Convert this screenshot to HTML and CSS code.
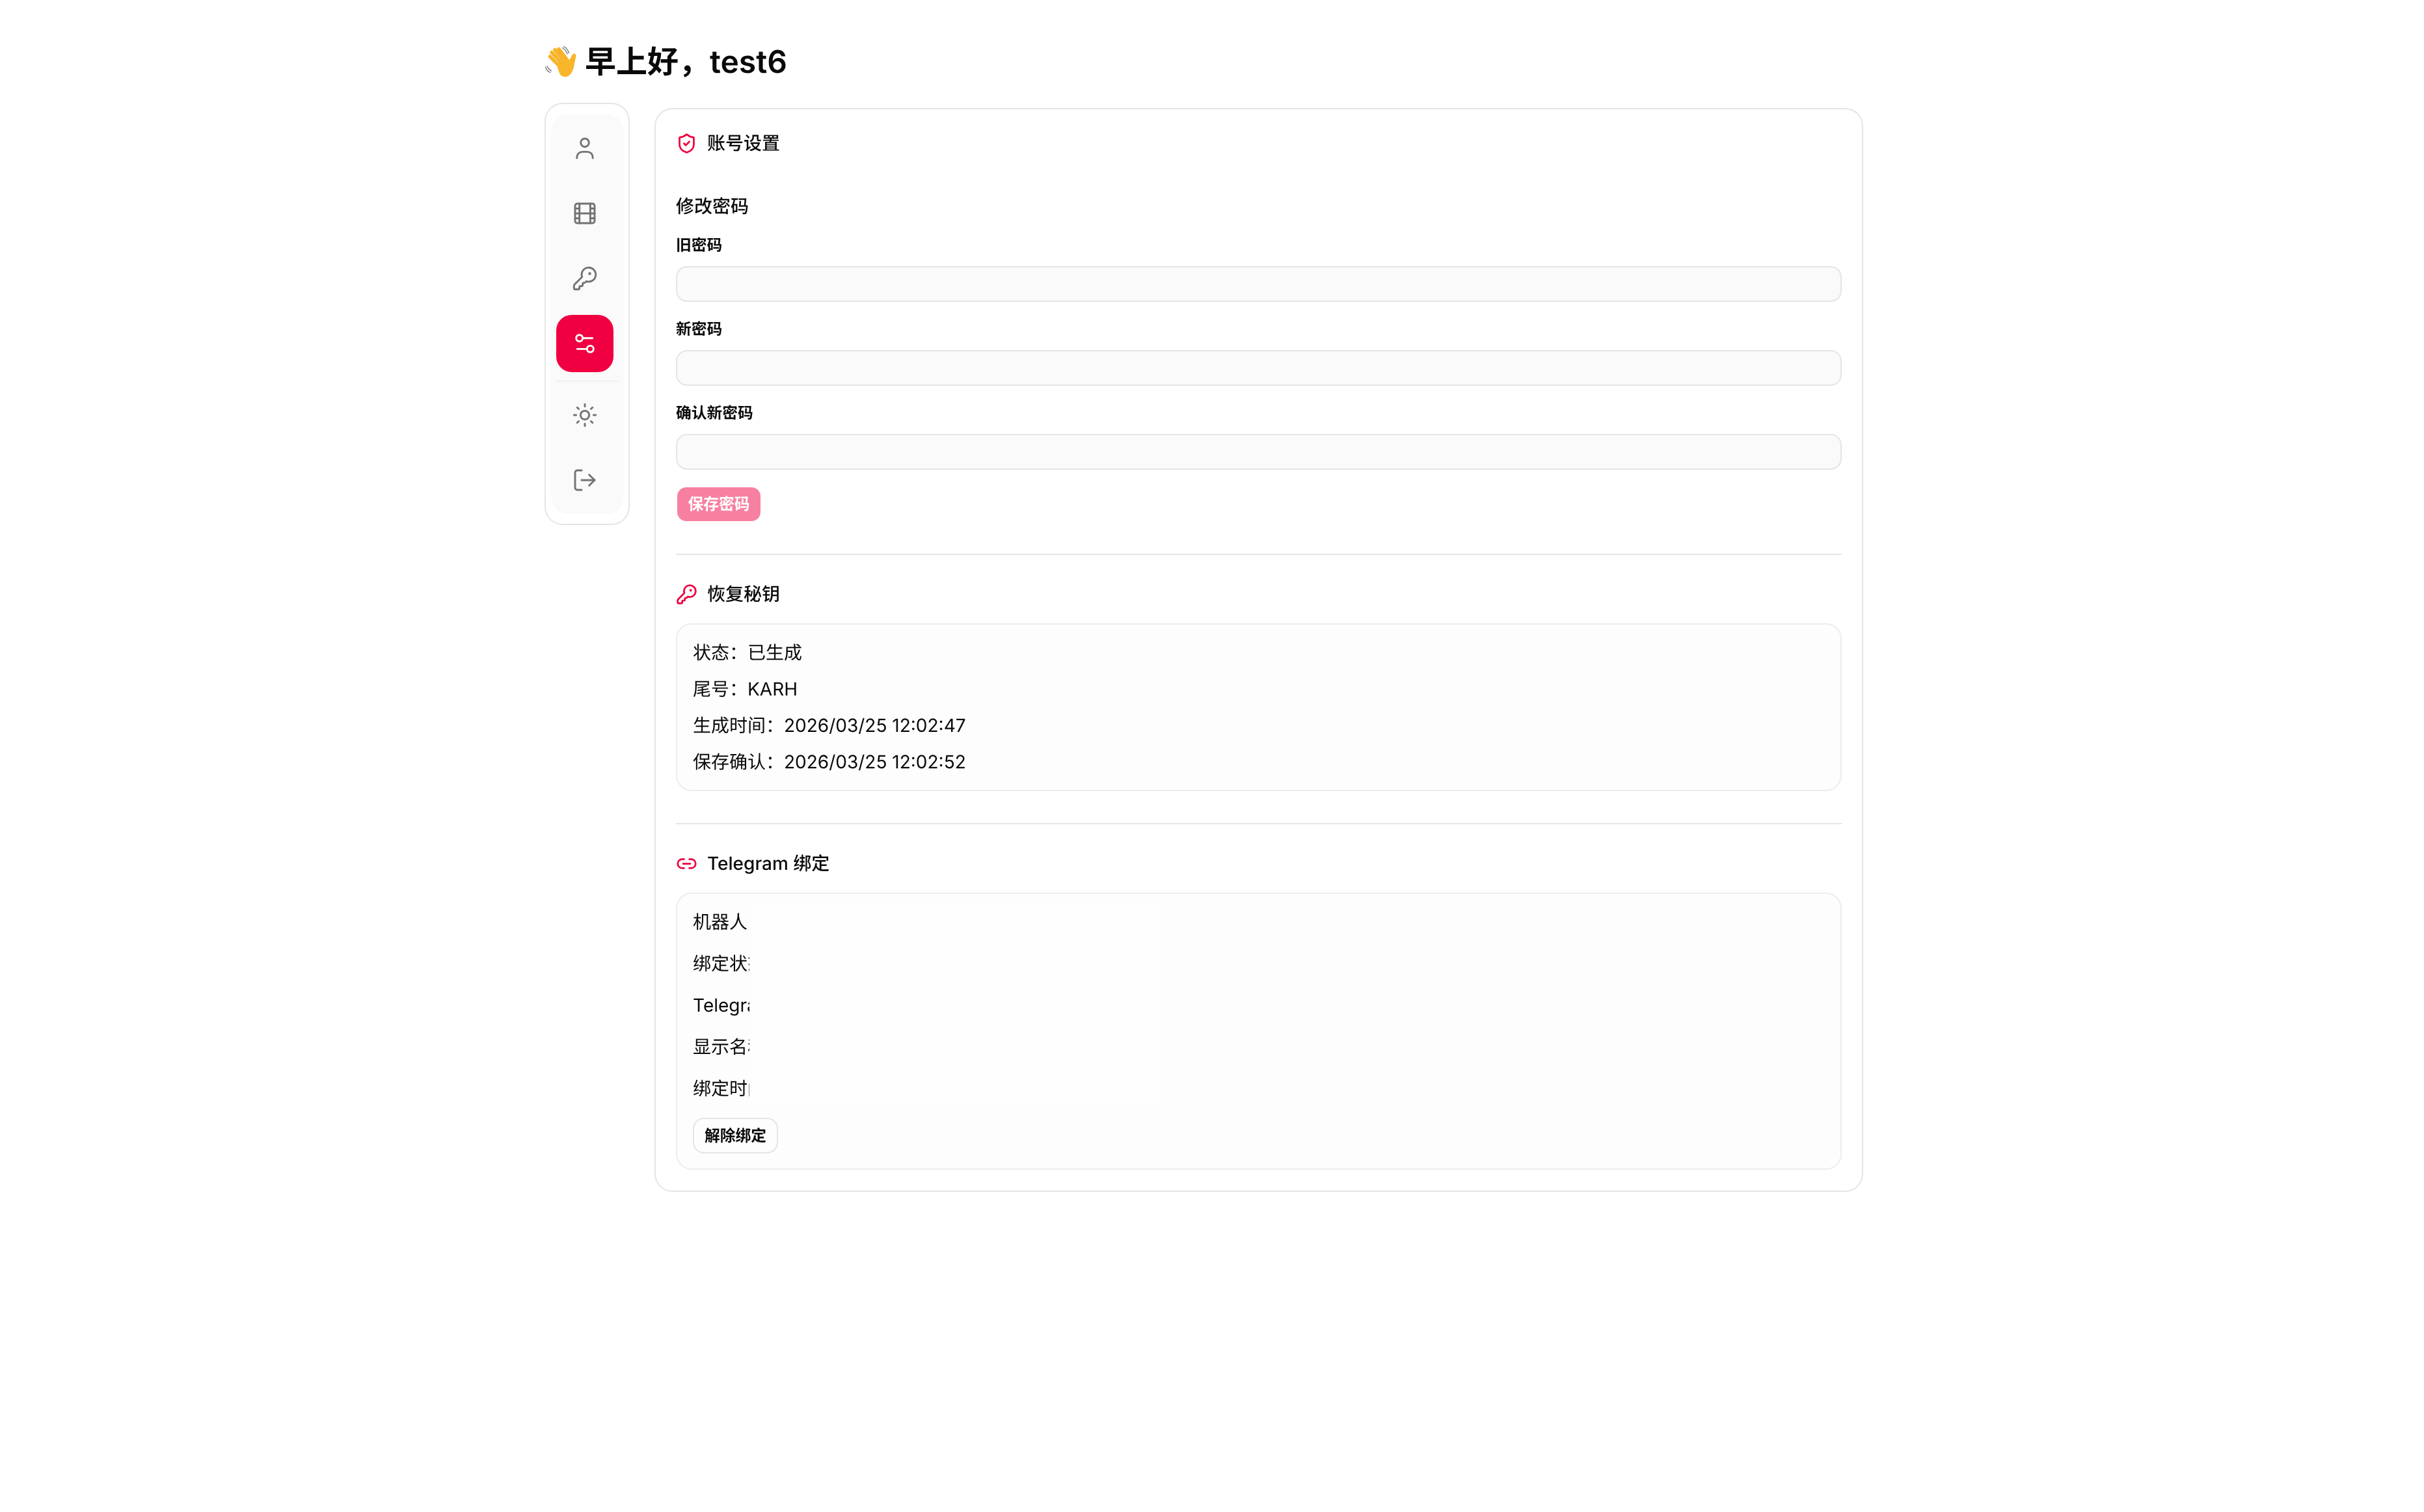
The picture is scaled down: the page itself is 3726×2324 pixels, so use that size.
FILE: index.html
```html
<!DOCTYPE html>
<html lang="zh-CN">
<head>
  <meta charset="UTF-8" />
  <title>账号设置</title>
  <link rel="stylesheet" href="styles.css">
</head>
<body>
  <div class="page">
    <h1 class="greeting">
      <svg class="wave" viewBox="8 10 50 50" fill="none" stroke-linecap="round">
        <g stroke="#5f5f5f" stroke-width="1.100">
          <path d="M35.500 13.500c3 1.500 6 5 7.500 9.500" />
          <path d="M37.500 11.500c3.500 1.500 6.500 5.500 8 10" />
          <path d="M9.500 43c1 3.500 4 7 7.500 8.500" />
          <path d="M12 41.500c1 3 3.500 5.500 6.500 7.500" />
        </g>
        <path d="M27 38c4-4 11-6 18-5 2-1 3.500-5 6-9.500 1.500-1.800 5.500-1 5.500 1.500-.3 4-1.500 8-2.500 12.500-1 7-3 14-8 18.500-4 3-9 2.500-12.500 0-3-3-5-9-6.500-18z" fill="#f9b52b" />
        <g stroke="#f9b52b" stroke-width="5.600">
          <path d="M16.500 27l16 16" />
          <path d="M19 20.500l17 17.500" />
          <path d="M24 16.500l16 18" />
          <path d="M30 15.500l13 17" />
        </g>
        <g stroke="#e09a1c" stroke-width=".5">
          <path d="M19.500 23.500l14.500 15" />
          <path d="M22 18l14 15" />
          <path d="M27.500 15.500l12.500 15" />
        </g>
      </svg>
      早上好，test6
    </h1>

    <div class="layout">
      <nav class="sidebar">
        <div class="sidebar-inner">
          <a class="nav-btn">
            <svg class="nav-icon" viewBox="0 0 24 24"><circle cx="12" cy="6.800" r="3.800" /><path d="M4.700 21v-.8a5 5 0 0 1 5-5h4.600a5 5 0 0 1 5 5v.8" /></svg>
          </a>
          <a class="nav-btn">
            <svg class="nav-icon" viewBox="0 0 24 24"><rect width="18" height="18" x="3" y="3" rx="2" /><path d="M7 3v18" /><path d="M3 7.500h4" /><path d="M3 12h18" /><path d="M3 16.500h4" /><path d="M17 3v18" /><path d="M17 7.500h4" /><path d="M17 16.500h4" /></svg>
          </a>
          <a class="nav-btn">
            <svg class="nav-icon" viewBox="0 0 24 24"><path d="M2.586 17.414A2 2 0 0 0 2 18.828V21a1 1 0 0 0 1 1h3a1 1 0 0 0 1-1v-1a1 1 0 0 1 1-1h1a1 1 0 0 0 1-1v-1a1 1 0 0 1 1-1h.172a2 2 0 0 0 1.414-.586l.814-.814a6.500 6.500 0 1 0-4-4z" /><circle cx="16.500" cy="7.500" r=".5" fill="currentColor" /></svg>
          </a>
          <a class="nav-btn active">
            <svg class="nav-icon" viewBox="0 0 24 24"><path d="M14 17H5" /><path d="M19 7h-9" /><circle cx="17" cy="17" r="3" /><circle cx="7" cy="7" r="3" /></svg>
          </a>
          <div class="nav-divider"></div>
          <a class="nav-btn">
            <svg class="nav-icon" viewBox="0 0 24 24"><circle cx="12" cy="12" r="4" /><path d="M12 2v2" /><path d="M12 20v2" /><path d="m4.930 4.930 1.410 1.410" /><path d="m17.660 17.660 1.410 1.410" /><path d="M2 12h2" /><path d="M20 12h2" /><path d="m6.340 17.660-1.410 1.410" /><path d="m19.070 4.930-1.410 1.410" /></svg>
          </a>
          <a class="nav-btn">
            <svg class="nav-icon" viewBox="0 0 24 24"><path d="M9 21H5a2 2 0 0 1-2-2V5a2 2 0 0 1 2-2h4" /><path d="m16 17 5-5-5-5" /><path d="M21 12H9" /></svg>
          </a>
        </div>
      </nav>

      <main class="card">
        <div class="section-title">
          <svg class="title-icon" viewBox="0 0 24 24"><path d="M20 13c0 5-3.500 7.500-7.660 8.950a1 1 0 0 1-.67-.01C7.500 20.500 4 18 4 13V6a1 1 0 0 1 1-1c2 0 4.500-1.200 6.240-2.720a1.170 1.170 0 0 1 1.520 0C14.510 3.810 17 5 19 5a1 1 0 0 1 1 1z" /><path d="m9 12 2 2 4-4" /></svg>
          账号设置
        </div>

        <h3 class="sub-title">修改密码</h3>
        <div class="field">
          <label class="field-label">旧密码</label>
          <input class="field-input" type="password" />
        </div>
        <div class="field">
          <label class="field-label">新密码</label>
          <input class="field-input" type="password" />
        </div>
        <div class="field">
          <label class="field-label">确认新密码</label>
          <input class="field-input" type="password" />
        </div>
        <button class="save-btn">保存密码</button>

        <hr class="divider save-divider" />

        <div class="section-title">
          <svg class="title-icon" viewBox="0 0 24 24"><path d="M2.586 17.414A2 2 0 0 0 2 18.828V21a1 1 0 0 0 1 1h3a1 1 0 0 0 1-1v-1a1 1 0 0 1 1-1h1a1 1 0 0 0 1-1v-1a1 1 0 0 1 1-1h.172a2 2 0 0 0 1.414-.586l.814-.814a6.500 6.500 0 1 0-4-4z" /><circle cx="16.500" cy="7.500" r=".5" fill="currentColor" /></svg>
          恢复秘钥
        </div>
        <div class="info-box recovery">
          <div>状态：已生成</div>
          <div>尾号：KARH</div>
          <div>生成时间：2026/03/25 12:02:47</div>
          <div>保存确认：2026/03/25 12:02:52</div>
        </div>

        <hr class="divider" />

        <div class="section-title">
          <svg class="title-icon" viewBox="0 0 24 24"><path d="M9 17H7A5 5 0 0 1 7 7h2" /><path d="M15 7h2a5 5 0 1 1 0 10h-2" /><path d="M8 12h8" /></svg>
          Telegram 绑定
        </div>
        <div class="info-box telegram">
          <div>机器人：</div>
          <div>绑定状态：</div>
          <div>Telegram：</div>
          <div>显示名称：</div>
          <div>绑定时间：</div>
          <button class="unbind-btn">解除绑定</button>
          <div class="mask"></div>
        </div>
      </main>
    </div>
  </div>
</body>
</html>
```

FILE: styles.css
```css
* {
  box-sizing: border-box;
}
body {
  margin: 0;
  background: #fff;
  color: #0a0a0a;
  font-family: Inter, "Noto Sans CJK SC", sans-serif;
  font-size: 28px;
  line-height: 38px;
  text-rendering: geometricPrecision;
}
.page {
  width: 2027px;
  margin-left: 837px;
  padding-top: 66px;
  will-change: transform;
}
.greeting {
  display: flex;
  align-items: center;
  gap: 12px;
  margin: 0;
  height: 58px;
  font-size: 48px;
  line-height: 58px;
  font-weight: 600;
}
.wave {
  width: 50px;
  height: 50px;
  flex: none;
}
.layout {
  display: flex;
  align-items: flex-start;
  gap: 38px;
  margin-top: 34px;
}

/* sidebar */
.sidebar {
  width: 131px;
  flex: none;
  padding: 16px 7px 15px 8px;
  border: 2px solid #e5e5e5;
  border-radius: 28px;
  background: #fff;
}
.sidebar-inner {
  display: flex;
  flex-direction: column;
  gap: 12px;
  padding: 8px;
  background: #fafafa;
  border-radius: 26px;
}
.nav-btn {
  display: flex;
  align-items: center;
  justify-content: center;
  width: 88px;
  height: 88px;
  border-radius: 24px;
  color: #737373;
}
.nav-btn.active {
  background: #f00040;
  color: #fff;
}
.nav-icon {
  width: 40px;
  height: 40px;
  fill: none;
  stroke: currentColor;
  stroke-width: 1.75;
  stroke-linecap: round;
  stroke-linejoin: round;
}
.nav-divider {
  height: 2px;
  margin-top: 1px;
  margin-bottom: -5px;
  background: #f0f0f0;
}

/* main card */
.card {
  width: 1858px;
  margin-top: 8px;
  padding: 33px 31px 32px;
  border: 2px solid #e5e5e5;
  border-radius: 28px;
  background: #fff;
}
.section-title {
  display: flex;
  align-items: center;
  gap: 15px;
  height: 38px;
  font-weight: 500;
}
.title-icon {
  width: 33px;
  height: 33px;
  flex: none;
  fill: none;
  stroke: #f00040;
  color: #f00040;
  stroke-width: 2;
  stroke-linecap: round;
  stroke-linejoin: round;
}
.sub-title {
  margin: 59px 0 24px;
  font-size: 28px;
  line-height: 38px;
  font-weight: 500;
}
.field {
  margin-bottom: 25px;
}
.field-label {
  display: block;
  height: 34px;
  margin-bottom: 15px;
  font-size: 23.75px;
  line-height: 34px;
  font-weight: 600;
}
.field-input {
  display: block;
  width: 100%;
  height: 55px;
  border: 2px solid #e5e5e5;
  border-radius: 17px;
  background: #fafafa;
}
.save-btn {
  display: block;
  width: 128px;
  height: 52px;
  margin: 27px 0 0 2px;
  padding: 0;
  border: 0;
  border-radius: 14px;
  background: #f780a0;
  color: #fff;
  font: inherit;
  font-size: 23.75px;
  font-weight: 600;
}
.divider {
  height: 2px;
  margin: 0 0 41px;
  border: 0;
  background: #e5e5e5;
}
.save-divider {
  margin-top: 50px;
}
.info-box {
  position: relative;
  display: flex;
  flex-direction: column;
  align-items: flex-start;
  margin-top: 26px;
  padding: 24px;
  border: 2px solid #ededed;
  border-radius: 24px;
  background: #fdfdfd;
}
.recovery {
  gap: 18px;
  margin-bottom: 49px;
}
.telegram {
  gap: 26px;
  padding-bottom: 23px;
}
.telegram > div {
  white-space: nowrap;
}
.unbind-btn {
  width: 131px;
  height: 55px;
  padding: 0;
  border: 2px solid #e5e5e5;
  border-radius: 17px;
  background: #fdfdfd;
  color: #0a0a0a;
  font: inherit;
  font-size: 23.75px;
  font-weight: 600;
}
.mask {
  position: absolute;
  left: 111px;
  top: 14px;
  width: 628px;
  height: 308px;
  background: #fefefe;
}
```
